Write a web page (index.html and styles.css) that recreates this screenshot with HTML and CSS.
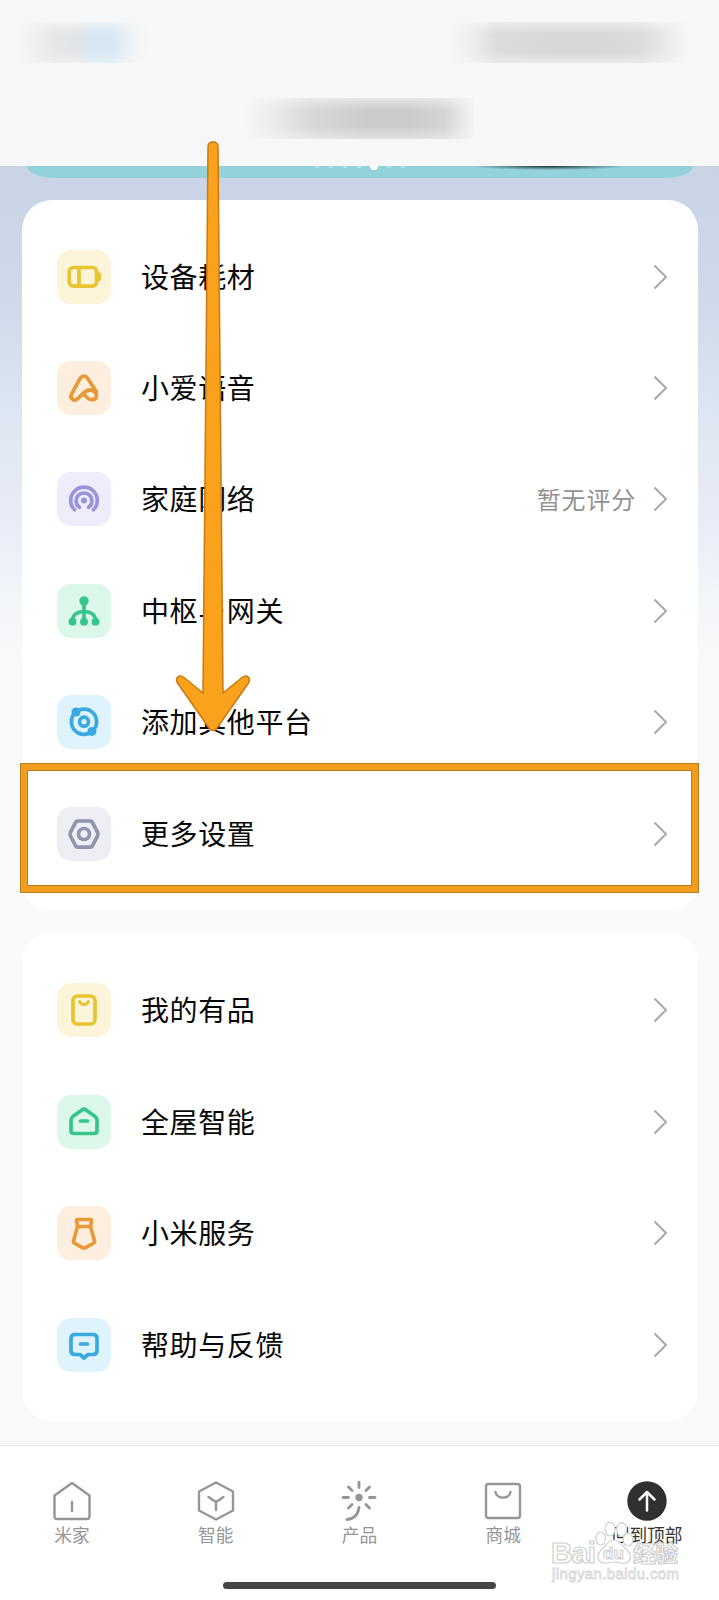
FILE: index.html
```html
<!DOCTYPE html>
<html lang="zh-CN">
<head>
<meta charset="utf-8">
<title>米家</title>
<link rel="stylesheet" href="styles.css">
</head>
<body>
<div class="screen">
  <header class="header">
    <div class="status"><span class="smudge smudge-left"></span><span class="smudge smudge-right"></span></div>
    <span class="smudge smudge-title"></span>
  </header>
  <main class="content">
    <div class="banner"><div class="dots"><i></i><i></i><i></i><i></i><i class="on"></i><i></i><i></i></div><span class="shade"></span></div>
    <section class="card card-main">
      <div class="row"><svg class="icon yellow" viewBox="0 0 54 54"><rect x="12.3" y="17.500" width="27.200" height="18.600" rx="4"/><path d="M22 18v18"/><path class="fill" d="M40 20l3.500 3.200q1 .8 1 3.600t-1 3.600l-3.500 3.200z"/></svg><span class="label">设备耗材</span><svg class="chev" viewBox="0 0 15 26"><path d="M1.500 1.500L13 13 1.500 24.500"/></svg></div>
      <div class="row"><svg class="icon orange" viewBox="0 0 54 54"><path d="M39.500 31L30.600 17.200a4.300 4.300 0 0 0-7.300 0L14.600 33c-2.300 4.600 2.600 7.900 6.300 4.600l5.200-5.200c4.400-4.200 8-4.100 11-2 3.500 2.500 3 8-1.600 8.300-2.800.2-5.100-1.300-8-4.900"/></svg><span class="label">小爱语音</span><svg class="chev" viewBox="0 0 15 26"><path d="M1.500 1.500L13 13 1.500 24.500"/></svg></div>
      <div class="row"><svg class="icon purple" viewBox="0 0 54 54"><path d="M17.600 37.800a13.300 13.300 0 1 1 18.800 0M22.400 35.300a7.900 7.900 0 1 1 9.200 0"/><circle class="fill" cx="27" cy="28.500" r="3"/></svg><span class="label">家庭网络</span><span class="note">暂无评分</span><svg class="chev" viewBox="0 0 15 26"><path d="M1.500 1.500L13 13 1.500 24.500"/></svg></div>
      <div class="row"><svg class="icon green" viewBox="0 0 54 54"><path d="M27 17v20M15.500 37c0-6 4.500-9.500 11.500-9.500S38.500 31 38.500 37"/><g class="fill"><circle cx="27" cy="17" r="4.700"/><circle cx="15.500" cy="37.700" r="3.900"/><circle cx="27" cy="37.700" r="3.900"/><circle cx="38.500" cy="37.700" r="3.900"/></g></svg><span class="label">中枢与网关</span><svg class="chev" viewBox="0 0 15 26"><path d="M1.500 1.500L13 13 1.500 24.500"/></svg></div>
      <div class="row"><svg class="icon blue" viewBox="0 0 54 54"><circle cx="27" cy="26.700" r="12.600"/><circle cx="27" cy="26.700" r="4.500"/><g class="fill"><circle cx="19" cy="17" r="4.500"/><circle cx="35" cy="36.400" r="4.500"/></g></svg><span class="label">添加其他平台</span><svg class="chev" viewBox="0 0 15 26"><path d="M1.500 1.500L13 13 1.500 24.500"/></svg></div>
      <div class="row marked"><svg class="icon slate" viewBox="0 0 54 54"><path d="M20.800 14h12.400q1.500 0 2.200 1.300l5.100 9.900q1 1.900 0 3.800l-5.100 9.900q-.7 1.300-2.200 1.300H20.800q-1.500 0-2.200-1.300L13.500 29q-1-1.900 0-3.800l5.100-9.900q.7-1.300 2.200-1.300z"/><circle cx="27" cy="27" r="5.500"/></svg><span class="label">更多设置</span><svg class="chev" viewBox="0 0 15 26"><path d="M1.500 1.500L13 13 1.500 24.500"/></svg></div>
    </section>
    <section class="card card-more">
      <div class="row"><svg class="icon yellow" viewBox="0 0 54 54"><rect x="16" y="13" width="22" height="28" rx="4.500"/><path class="thin" d="M22.500 18.500c2 4 7 4 9 0"/></svg><span class="label">我的有品</span><svg class="chev" viewBox="0 0 15 26"><path d="M1.500 1.500L13 13 1.500 24.500"/></svg></div>
      <div class="row"><svg class="icon green" viewBox="0 0 54 54"><path d="M25 14.900q2-1.500 4 0l9.200 6.700q1.800 1.400 1.800 3.500v10.400q0 3-3 3H17q-3 0-3-3V25.100q0-2.100 1.800-3.500zM23.500 26h7"/></svg><span class="label">全屋智能</span><svg class="chev" viewBox="0 0 15 26"><path d="M1.500 1.500L13 13 1.500 24.500"/></svg></div>
      <div class="row"><svg class="icon orange" viewBox="0 0 54 54"><path d="M20.500 13.500h13q1 0 1 1l-1 6h-13l-1-6q0-1 1-1zM20.500 20.500L16.500 35q-.3 1.300.7 2l8.300 4.600q1.500.8 3 0L36.800 37q1-.7.700-2l-4-14.500"/></svg><span class="label">小米服务</span><svg class="chev" viewBox="0 0 15 26"><path d="M1.500 1.500L13 13 1.500 24.500"/></svg></div>
      <div class="row"><svg class="icon blue" viewBox="0 0 54 54"><path d="M18 16.500h18q4 0 4 4v12q0 4-4 4h-5L27 40l-4-3.500h-5q-4 0-4-4v-12q0-4 4-4zM23.500 26h7"/></svg><span class="label">帮助与反馈</span><svg class="chev" viewBox="0 0 15 26"><path d="M1.500 1.500L13 13 1.500 24.500"/></svg></div>
    </section>
  </main>
  <nav class="tabs">
    <div class="tab"><svg viewBox="0 0 40 40"><path d="M20 2L37.500 14.500v21q0 2.500-2.500 2.500H5Q2.500 38 2.500 35.500v-21zM20 21v9"/></svg><span>米家</span></div>
    <div class="tab"><svg viewBox="0 0 40 40"><path d="M20 1.500l17 9v19l-17 9-17-9v-19zM12.500 16l7.500 5 7.500-5M20 21v8"/></svg><span>智能</span></div>
    <div class="tab"><svg viewBox="0 0 40 40"><circle class="core" cx="20" cy="16.500" r="3.700"/><path class="rays" d="M20 1v5.500M9.500 6l3.500 3.500M30.500 6L27 9.500M4 16.500h5.500M30.500 16.500H36M9.500 27l3.500-3.500M30.500 27L27 23.500M20 26.500q-1.500 11-12 12"/></svg><span>产品</span></div>
    <div class="tab"><svg viewBox="0 0 40 40"><rect x="3" y="3" width="34" height="34" rx="2.500"/><path d="M12.500 11c1 7.500 14 7.500 15 0"/></svg><span>商城</span></div>
    <div class="tab active"><svg viewBox="0 0 40 40"><circle class="disc" cx="20" cy="20" r="19.700"/><path class="up" d="M20 29.500V11M12.500 18.500L20 11l7.500 7.500"/></svg><span>回到顶部</span></div>
  </nav>
  <div class="homebar"></div>
  <svg class="arrow" viewBox="0 0 76 594"><path d="M33 7q0-5 5-5t5 5l5 546 19-15.500c5-3.500 9.500.5 6.500 5.500L42 588q-4 5-8 0L2.500 543c-3-5 1.500-9 6.500-5.500L28 553z"/></svg>
  <div class="highlight"></div>
  <svg class="watermark" viewBox="0 0 140 70"><g class="wm-text"><text x="0" y="42" font-size="30" textLength="45">Bai</text><text x="82" y="41" font-size="23" textLength="45">经验</text><text class="site" x="1" y="58" font-size="15" textLength="127">jingyan.baidu.com</text></g><g class="paw"><ellipse cx="49.700" cy="17.500" rx="4.800" ry="6.500"/><ellipse cx="59" cy="8" rx="5" ry="6.800"/><ellipse cx="70.700" cy="8.500" rx="5" ry="6.800"/><ellipse cx="77" cy="18.500" rx="4.800" ry="6.500"/><path d="M63 19c6 0 8 5 12 9 9 8 3 16-5 14q-7-2-14 0c-8 1-13-6-5-14 5-4 6-9 12-9z"/></g><text class="wm-du" x="52" y="38" font-size="17" textLength="21">du</text></svg>
</div>
</body>
</html>
```
FILE: styles.css
```css
* { box-sizing: border-box; }
body { margin: 0; font-family: "Noto Sans CJK SC", sans-serif; background: #fafafa; }
.screen { position: relative; width: 719px; height: 1600px; overflow: hidden; display: flex; flex-direction: column; background: #fafafa; }
.header { height: 166px; flex: none; background: #f7f7f7; padding: 22px 33px 0 18px; display: flex; flex-direction: column; align-items: center; gap: 35px; }
.status { width: 100%; display: flex; justify-content: space-between; }
.smudge { display: block; height: 41px; position: relative; }
.smudge::after { content: ""; position: absolute; inset: 0; background: linear-gradient(180deg, rgba(247,247,247,.6), rgba(247,247,247,0) 30%, rgba(247,247,247,0) 70%, rgba(247,247,247,.5)); }
.smudge-left { width: 132px; background: linear-gradient(90deg, #f7f7f7, #e6e6e6 28%, #e1e5e8 45%, #d6e7f3 60%, #d8e8f3 72%, #f0f4f6 88%, #f7f7f7); }
.smudge-right { width: 240px; background: linear-gradient(90deg, #f7f7f7, #efefef 10%, #dcdcdc 21%, #d7d7d7 45%, #d7d7d7 65%, #dcdcdc 82%, #f5f5f5); }
.smudge-title { width: 230px; margin-left: 13px; background: linear-gradient(90deg, #f7f7f7, #eaeaea 13%, #d7d7d7 30%, #cbcbcb 54%, #cbcbcb 72%, #d4d4d4 87%, #f4f4f4); }
.content { flex: none; height: 1279px; padding: 0 21px 0 22px; background: linear-gradient(180deg, #c8d4e6 0, #cbd5e8 40px, #ced9ea 130px, #dde6f2 250px, #e8ecf7 350px, #f2f5fa 430px, #fafafa 510px); }
.banner { position: relative; height: 12px; margin: 0 5px; background: #93d1db; border-radius: 0 0 28px 28px / 0 0 12px 12px; overflow: hidden; }
.dots { display: flex; justify-content: center; gap: 8px; margin-top: -4px; }
.dots i { width: 6px; height: 6px; border-radius: 50%; background: #b5e0e6; }
.dots .on { width: 8px; height: 8px; background: #fff; }
.shade { position: absolute; left: 445px; top: -4px; width: 155px; height: 8px; background: radial-gradient(closest-side, #1c3036, #93d1db); }
.card { background: #fff; border-radius: 30px; display: flex; flex-direction: column; }
.card-main { margin-top: 22px; height: 711px; padding-top: 21px; }
.card-more { margin-top: 21px; height: 489px; padding-top: 22.700px; }
.row { height: 111.400px; flex: none; display: flex; align-items: center; padding: 0 30px 0 35px; }
.icon { width: 54px; height: 54px; border-radius: 14px; fill: none; stroke: currentColor; stroke-width: 3.700; stroke-linecap: round; stroke-linejoin: round; }
.icon .fill { fill: currentColor; stroke: none; }
.icon .thin { stroke-width: 3; }
.yellow { background: #fdf5da; color: #e8c530; }
.orange { background: #fdeedf; color: #e79a35; }
.purple { background: #eeedfb; color: #9a94d8; }
.green { background: #dcf8eb; color: #35c58d; }
.blue { background: #dff3fd; color: #3aa9df; }
.slate { background: #eeeff5; color: #9094ad; }
.label { margin: -2px 0 0 30px; font-size: 28px; letter-spacing: .600px; line-height: 40px; color: #080808; flex: 1; white-space: nowrap; }
.note { font-size: 24px; letter-spacing: .800px; line-height: 34px; color: #929292; margin-right: 17px; }
.chev { width: 15px; height: 26px; fill: none; stroke: #a9a9a9; stroke-width: 2; }
.tabs { height: 155px; flex: none; background: #fff; border-top: 1px solid #e6e6e6; display: grid; grid-template-columns: repeat(5, 1fr); padding-top: 34.500px; }
.tab { display: flex; flex-direction: column; align-items: center; color: #969696; font-size: 17.700px; line-height: 26px; }
.tab svg { width: 40px; height: 40px; fill: none; stroke: currentColor; stroke-width: 2.400; stroke-linecap: round; stroke-linejoin: round; }
.tab .core { fill: currentColor; stroke: none; }
.tab .rays { stroke-width: 2.800; }
.active { color: #333; }
.tab .disc { fill: #303030; stroke: none; }
.tab .up { stroke: #fff; stroke-width: 2.500; }
.homebar { position: absolute; left: 223px; top: 1582px; width: 273px; height: 7px; border-radius: 4px; background: #464646; }
.arrow { position: absolute; left: 175px; top: 140px; width: 76px; height: 594px; fill: #faa21b; stroke: #c97a10; stroke-width: 1.500; }
.highlight { position: absolute; left: 20px; top: 763px; width: 679px; height: 130px; border: 7px solid #f29d1e; outline: 1px solid #bd7b20; outline-offset: -1px; box-shadow: inset 0 0 0 1px #bd7b20; }
.watermark { position: absolute; left: 551px; top: 1521px; width: 140px; height: 70px; overflow: visible; font-family: "Liberation Sans", "Noto Sans CJK SC", sans-serif; font-weight: 700; }
.wm-text, .paw { fill: #fff; stroke: #cfcfcf; stroke-width: 1.200; }
.wm-text .site { font-weight: 400; stroke-width: .800; stroke: #d5d5d5; }
.wm-du { fill: #fff; stroke: #cfcfcf; stroke-width: 1; }
```
